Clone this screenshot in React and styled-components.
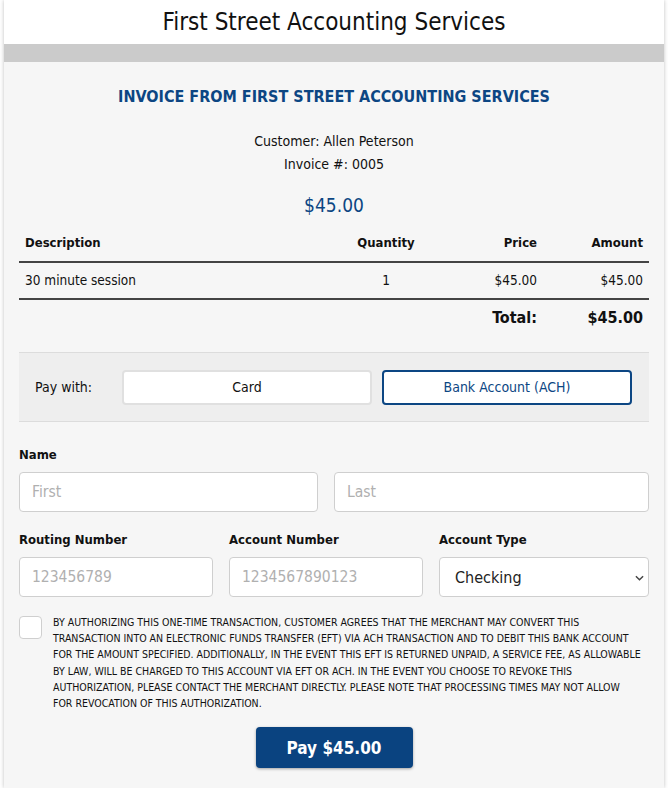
import React, { useState } from 'react'
import styled, { createGlobalStyle } from 'styled-components'

const GlobalStyle = createGlobalStyle`
  body {
    margin: 0;
    background: #ffffff;
    font-family: "DejaVu Sans Condensed", "DejaVu Sans", sans-serif;
    font-stretch: condensed;
    color: #111;
  }
  * { box-sizing: border-box; }
`;

const NAVY = '#0c4683';

const items = [
  { description: '30 minute session', quantity: 1, price: '$45.00', amount: '$45.00' },
];

// authorization copy, broken the way the form lays it out
const legalLines = [
  'By authorizing this one-time transaction, customer agrees that the merchant may convert this',
  'transaction into an electronic funds transfer (EFT) via ACH transaction and to debit this bank account',
  'for the amount specified. Additionally, in the event this EFT is returned unpaid, a service fee, as allowable',
  'by law, will be charged to this account via EFT or ACH. In the event you choose to revoke this',
  'authorization, please contact the merchant directly. Please note that processing times may not allow',
  'for revocation of this authorization.',
];

const App = () => {
  const [method, setMethod] = useState('ach');

  return (
    <>
      <GlobalStyle />
      <Card>
        <Header>First Street Accounting Services</Header>
        <Divider />
        <Content>
          <Heading>INVOICE FROM FIRST STREET ACCOUNTING SERVICES</Heading>
          <Meta>
            <div>Customer: Allen Peterson</div>
            <div>Invoice #: 0005</div>
          </Meta>
          <Amount>$45.00</Amount>

          <Table>
            <colgroup>
              <col style={{ width: 316 }} />
              <col style={{ width: 102 }} />
              <col style={{ width: 106 }} />
              <col style={{ width: 106 }} />
            </colgroup>
            <thead>
              <tr>
                <Th>Description</Th>
                <Th $align="center">Quantity</Th>
                <Th $align="right">Price</Th>
                <Th $align="right">Amount</Th>
              </tr>
            </thead>
            <tbody>
              {items.map((item) => (
                <tr key={item.description}>
                  <Td>{item.description}</Td>
                  <Td $align="center">{item.quantity}</Td>
                  <Td $align="right">{item.price}</Td>
                  <Td $align="right">{item.amount}</Td>
                </tr>
              ))}
            </tbody>
            <tfoot>
              <tr>
                <TotalCell colSpan={3}>Total:</TotalCell>
                <TotalCell>$45.00</TotalCell>
              </tr>
            </tfoot>
          </Table>

          <PayWith>
            <PayLabel>Pay with:</PayLabel>
            <MethodButton $active={method === 'card'} onClick={() => setMethod('card')}>Card</MethodButton>
            <MethodButton $active={method === 'ach'} onClick={() => setMethod('ach')}>Bank Account (ACH)</MethodButton>
          </PayWith>

          <Field $top={25}>
            <Label>Name</Label>
            <Row $cols="299px 1fr">
              <Input placeholder="First" />
              <Input placeholder="Last" />
            </Row>
          </Field>

          <Row $cols="194px 194px 1fr">
            <Field $top={20}>
              <Label>Routing Number</Label>
              <Input placeholder="123456789" />
            </Field>
            <Field $top={20}>
              <Label>Account Number</Label>
              <Input placeholder="1234567890123" />
            </Field>
            <Field $top={20}>
              <Label>Account Type</Label>
              <SelectWrap>
                <Select defaultValue="checking">
                  <option value="checking">Checking</option>
                  <option value="savings">Savings</option>
                </Select>
                <Chevron viewBox="0 0 10 6">
                  <path d="M1 1l4 4 4-4" fill="none" stroke="#444" strokeWidth="1.6" />
                </Chevron>
              </SelectWrap>
            </Field>
          </Row>

          <Consent>
            <Checkbox type="checkbox" />
            <Legal>
              {legalLines.map((line) => (
                <div key={line}>{line}</div>
              ))}
            </Legal>
          </Consent>

          <PayButton>Pay $45.00</PayButton>
        </Content>
      </Card>
    </>
  )
};

const Card = styled.div`
  margin: 0 4px;
  min-height: 788px;
  background: #f6f6f6;
  box-shadow: 0 0 4px rgba(0, 0, 0, 0.25);
`;

const Header = styled.h1`
  margin: 0;
  height: 44px;
  background: #fff;
  font-size: 24px;
  font-weight: 400;
  line-height: 44px;
  text-align: center;
  color: #111;
`;

const Divider = styled.div`
  height: 18px;
  background: #cbcbcb;
`;

const Content = styled.div`
  padding: 25px 15px 20px;
`;

const Heading = styled.h2`
  margin: 0;
  font-size: 16px;
  font-weight: 700;
  text-align: center;
  color: ${NAVY};
`;

const Meta = styled.div`
  margin-top: 24px;
  font-size: 14px;
  line-height: 23px;
  text-align: center;
`;

const Amount = styled.div`
  margin-top: 18px;
  font-size: 19px;
  text-align: center;
  color: ${NAVY};
`;

const Table = styled.table`
  width: 100%;
  margin-top: 11px;
  border-collapse: collapse;
  table-layout: fixed;
  font-size: 13.5px;
`;

const Th = styled.th`
  padding: 8px 6px 11px;
  font-size: 13px;
  font-weight: 700;
  text-align: ${(p) => p.$align || 'left'};
  border-bottom: 2px solid #444;
`;

const Td = styled.td`
  padding: 9px 6px 10px;
  text-align: ${(p) => p.$align || 'left'};
  border-bottom: 2px solid #444;
`;

const TotalCell = styled.td`
  padding: 8px 6px 8px;
  font-size: 16px;
  font-weight: 700;
  text-align: right;
`;

const PayWith = styled.div`
  margin-top: 17px;
  height: 70px;
  display: grid;
  grid-template-columns: 77px 1fr 1fr;
  gap: 10px;
  align-items: center;
  padding: 0 17px 0 16px;
  background: #eeeeee;
  border-top: 1px solid #dcdcdc;
  border-bottom: 1px solid #dcdcdc;
`;

const PayLabel = styled.span`
  font-size: 14px;
`;

const MethodButton = styled.button`
  height: 35px;
  font-family: inherit;
  font-stretch: condensed;
  font-size: 14px;
  background: #fff;
  color: ${(p) => (p.$active ? NAVY : '#111')};
  border: ${(p) => (p.$active ? `2px solid ${NAVY}` : '2px solid #e0e0e0')};
  border-radius: 4px;
  cursor: pointer;
`;

const Field = styled.div`
  display: flex;
  flex-direction: column;
  margin-top: ${(p) => p.$top}px;
`;

const Label = styled.label`
  font-size: 13px;
  font-weight: 700;
  margin-bottom: 10px;
`;

const Row = styled.div`
  display: grid;
  grid-template-columns: ${(p) => p.$cols};
  gap: 16px;
`;

const Input = styled.input`
  height: 40px;
  width: 100%;
  padding: 0 12px;
  font-family: inherit;
  font-stretch: condensed;
  font-size: 15.5px;
  background: #fff;
  border: 1px solid #cfcfcf;
  border-radius: 4px;

  &::placeholder {
    color: #b0b0b0;
  }
`;

const SelectWrap = styled.div`
  position: relative;
`;

const Select = styled.select`
  appearance: none;
  height: 40px;
  width: 100%;
  padding: 0 15px;
  font-family: inherit;
  font-stretch: condensed;
  font-size: 16px;
  color: #222;
  background: #fff;
  border: 1px solid #cfcfcf;
  border-radius: 4px;
`;

const Chevron = styled.svg`
  position: absolute;
  right: 5px;
  top: 18px;
  width: 9px;
  height: 6px;
  pointer-events: none;
`;

const Consent = styled.div`
  display: flex;
  margin-top: 17px;
`;

const Checkbox = styled.input`
  appearance: none;
  flex: none;
  width: 23px;
  height: 23px;
  margin: 2px 0 0 0;
  background: #fff;
  border: 1px solid #cfcfcf;
  border-radius: 4px;
`;

const Legal = styled.div`
  margin-left: 11px;
  font-size: 10.5px;
  line-height: 16.2px;
  text-transform: uppercase;
  white-space: nowrap;
  color: #111;
`;

const PayButton = styled.button`
  display: block;
  margin: 16px auto 0;
  width: 157px;
  height: 41px;
  font-family: inherit;
  font-stretch: condensed;
  font-size: 17px;
  font-weight: 700;
  color: #fff;
  background: #0a4380;
  border: none;
  border-radius: 4px;
  box-shadow: 0 1px 3px rgba(0, 0, 0, 0.35);
  cursor: pointer;
`;

export default App
